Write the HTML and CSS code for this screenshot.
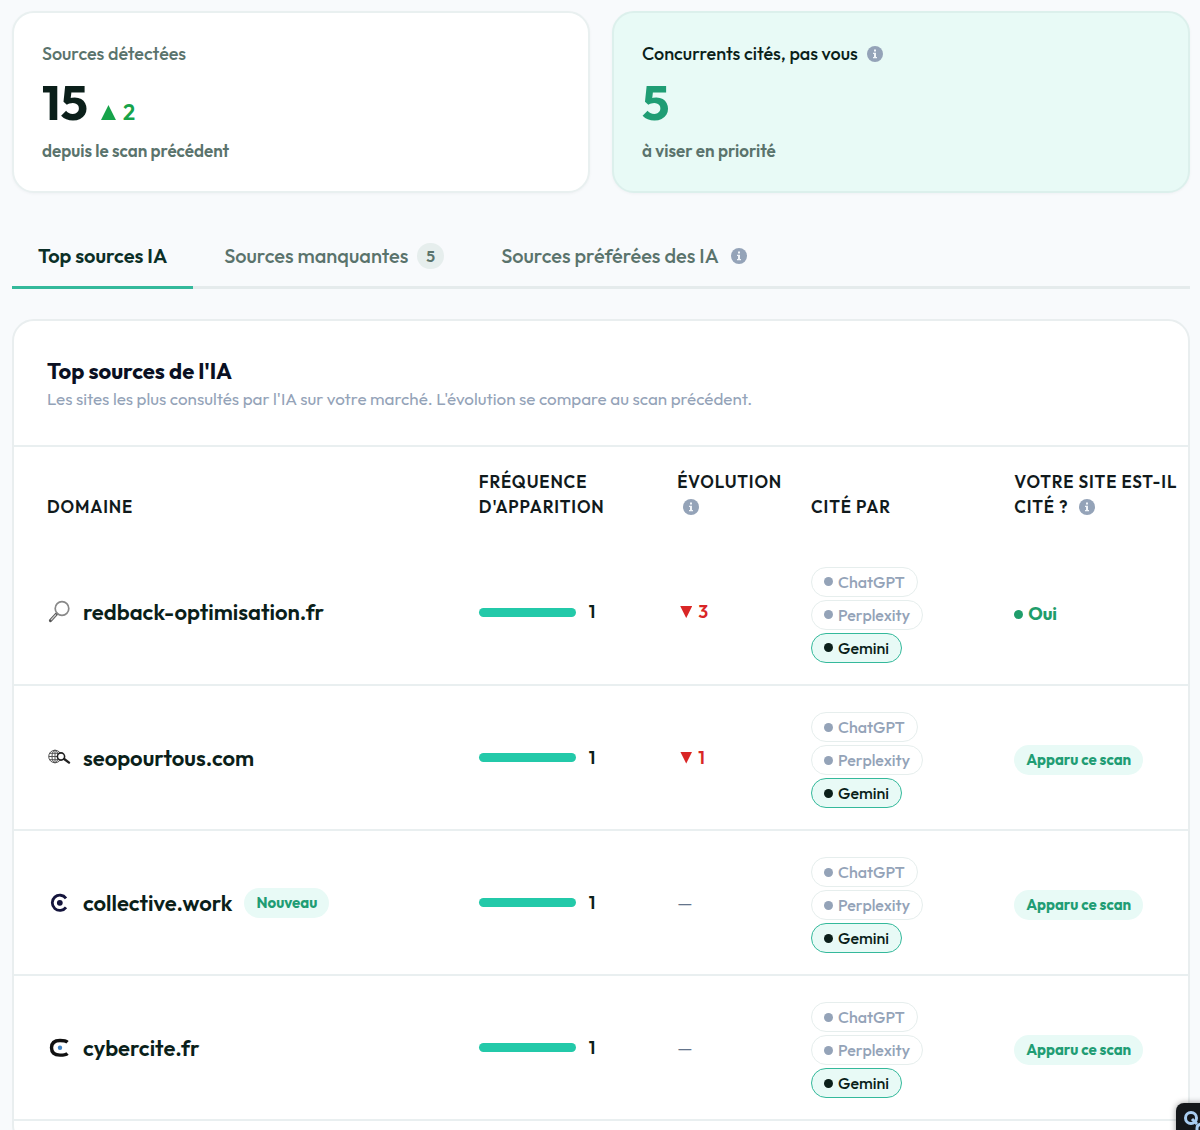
FILE: index.html
```html
<!DOCTYPE html>
<html lang="fr">
<head>
    <meta charset="UTF-8">
    <meta name="viewport" content="width=device-width, initial-scale=1.0">
    <title>Sources IA</title>
    <link rel="stylesheet" href="styles.css">
</head>
<body>
    <svg class="sprite" aria-hidden="true">
        <symbol id="info" viewBox="0 0 16 16">
            <circle cx="8" cy="8" r="8" fill="#94a3b8"/>
            <path d="M7 3.4h2v2H7zM6 6.7h3v4.2h1v1.3H6v-1.3h1V8H6z" fill="#f1f5f9"/>
        </symbol>
    </svg>

    <main class="page">
        <section class="stats">
            <div class="stat">
                <p class="stat-label">Sources détectées</p>
                <p class="stat-value">15 <span class="stat-delta"><i class="tri tri-up"></i>2</span></p>
                <p class="stat-note">depuis le scan précédent</p>
            </div>
            <div class="stat stat-accent">
                <p class="stat-label">Concurrents cités, pas vous <svg class="info"><use href="#info"/></svg></p>
                <p class="stat-value">5</p>
                <p class="stat-note">à viser en priorité</p>
            </div>
        </section>

        <nav class="tabs" role="tablist">
            <button class="tab active" role="tab" aria-selected="true">Top sources IA</button>
            <button class="tab" role="tab">Sources manquantes <span class="count">5</span></button>
            <button class="tab" role="tab">Sources préférées des IA <svg class="info"><use href="#info"/></svg></button>
        </nav>

        <section class="panel">
            <header class="panel-head">
                <h2>Top sources de l'IA</h2>
                <p>Les sites les plus consultés par l'IA sur votre marché. L'évolution se compare au scan précédent.</p>
            </header>
            <table class="sources">
                <colgroup>
                    <col class="col-domain">
                    <col class="col-freq">
                    <col class="col-evo">
                    <col class="col-cited">
                    <col class="col-site">
                </colgroup>
                <thead>
                    <tr>
                        <th>Domaine</th>
                        <th>Fréquence d'apparition</th>
                        <th>Évolution <svg class="info"><use href="#info"/></svg></th>
                        <th>Cité par</th>
                        <th>Votre site est-il cité ? <svg class="info"><use href="#info"/></svg></th>
                    </tr>
                </thead>
                <tbody>
                    <tr>
                        <td>
                            <div class="domain">
                                <svg class="favicon" viewBox="0 0 24 24" fill="none">
                                    <path d="M9.500 14 3.500 20.500" stroke="#555" stroke-width="3.200" stroke-linecap="round"/>
                                    <path d="M9 14.500 4 20" stroke="#ccc" stroke-width="1.200"/>
                                    <circle cx="15" cy="8.500" r="6.800" stroke="#888" stroke-width="1.700"/>
                                </svg>
                                redback-optimisation.fr
                            </div>
                        </td>
                        <td><div class="freq"><span class="bar"></span>1</div></td>
                        <td><span class="down"><i class="tri tri-down"></i>3</span></td>
                        <td>
                            <div class="chips">
                                <span class="chip">ChatGPT</span>
                                <span class="chip">Perplexity</span>
                                <span class="chip on">Gemini</span>
                            </div>
                        </td>
                        <td><span class="yes">Oui</span></td>
                    </tr>
                    <tr>
                        <td>
                            <div class="domain">
                                <svg class="favicon" viewBox="0 0 24 24" fill="none">
                                    <g stroke="#555" stroke-width="1">
                                        <circle cx="8" cy="10.500" r="6.300"/>
                                        <ellipse cx="8" cy="10.500" rx="3" ry="6.300"/>
                                        <path d="M8 4.200v12.600M1.700 10.500h12.600M2.500 7.300h11M2.500 13.700h11"/>
                                    </g>
                                    <circle cx="14" cy="10.500" r="3.600" fill="#fff" stroke="#222" stroke-width="1.600"/>
                                    <path d="m17.200 13 4.800 3.600" stroke="#222" stroke-width="2.400" stroke-linecap="round"/>
                                </svg>
                                seopourtous.com
                            </div>
                        </td>
                        <td><div class="freq"><span class="bar"></span>1</div></td>
                        <td><span class="down"><i class="tri tri-down"></i>1</span></td>
                        <td>
                            <div class="chips">
                                <span class="chip">ChatGPT</span>
                                <span class="chip">Perplexity</span>
                                <span class="chip on">Gemini</span>
                            </div>
                        </td>
                        <td><span class="badge">Apparu ce scan</span></td>
                    </tr>
                    <tr>
                        <td>
                            <div class="domain">
                                <svg class="favicon" viewBox="0 0 24 24" fill="none">
                                    <path d="M19 7.300A7.600 7.600 0 1 0 19 16.300" stroke="#14143c" stroke-width="2.800"/>
                                    <circle cx="12.800" cy="11.800" r="2.900" fill="#14143c"/>
                                </svg>
                                collective.work
                                <span class="badge">Nouveau</span>
                            </div>
                        </td>
                        <td><div class="freq"><span class="bar"></span>1</div></td>
                        <td><span class="none">—</span></td>
                        <td>
                            <div class="chips">
                                <span class="chip">ChatGPT</span>
                                <span class="chip">Perplexity</span>
                                <span class="chip on">Gemini</span>
                            </div>
                        </td>
                        <td><span class="badge">Apparu ce scan</span></td>
                    </tr>
                    <tr>
                        <td>
                            <div class="domain">
                                <svg class="favicon" viewBox="0 0 24 24" fill="none">
                                    <path d="M20.500 6.200C19 4.800 17 4.500 13 4.500 7 4.500 4.500 7 4.500 11.800S7 19.100 13 19.100c4 0 6-.3 7.500-1.700" stroke="#111" stroke-width="3.400"/>
                                    <circle cx="13" cy="11.800" r="2.200" fill="#3f83c4"/>
                                </svg>
                                cybercite.fr
                            </div>
                        </td>
                        <td><div class="freq"><span class="bar"></span>1</div></td>
                        <td><span class="none">—</span></td>
                        <td>
                            <div class="chips">
                                <span class="chip">ChatGPT</span>
                                <span class="chip">Perplexity</span>
                                <span class="chip on">Gemini</span>
                            </div>
                        </td>
                        <td><span class="badge">Apparu ce scan</span></td>
                    </tr>
                </tbody>
            </table>
        </section>
    </main>

    <button class="widget" aria-label="Assistant">
        <svg viewBox="0 0 32 32" fill="none" stroke="#a9cdf0" stroke-width="3">
            <circle cx="8" cy="8" r="5.500"/>
            <path d="m9 9 5 5M14 26v-8q0-4 6-4"/>
        </svg>
    </button>
</body>
</html>
```
FILE: styles.css
```css
* {
    margin: 0;
    padding: 0;
    box-sizing: border-box;
}

body {
    font-family: Outfit, Lato, sans-serif;
    font-size: 18px;
    line-height: 24px;
    color: #0b1f1a;
    background: #f8fafc;
    height: 100vh;
    overflow: hidden;
}

button {
    font: inherit;
    border: none;
    background: none;
    cursor: pointer;
}

.sprite {
    display: none;
}

.page {
    padding: 11px 10px 0 12px;
}

.info {
    width: 16px;
    height: 16px;
    margin-left: 6px;
    vertical-align: -2px;
}

/* stat cards */
.stats {
    display: grid;
    grid-template-columns: 1fr 1fr;
    gap: 22px;
}

.stat {
    padding: 28px;
    border: 2px solid #e9f0f0;
    border-radius: 22px;
    background: #fff;
    box-shadow: 0 1px 3px rgba(15, 23, 42, 0.04);
}

.stat-accent {
    background: #e8faf6;
    border-color: #dcf0ec;
}

.stat-label,
.stat-note {
    line-height: 25px;
    font-weight: 500;
    color: #5a736c;
}

.stat-note {
    font-size: 17px;
    font-weight: 600;
}

.stat-accent .stat-label {
    color: #0b1f1a;
}

.stat-value {
    display: flex;
    align-items: baseline;
    gap: 13px;
    margin: 12px 0;
    font-size: 49px;
    line-height: 48px;
    font-weight: 700;
}

.stat-accent .stat-value {
    color: #1f9d74;
}

.stat-delta {
    font-size: 22px;
    line-height: 24px;
    font-weight: 600;
    color: #16a34a;
}

.tri {
    display: inline-block;
    width: 15px;
    height: 15px;
    margin-right: 7px;
    background: currentColor;
}

.tri-up {
    clip-path: polygon(50% 0, 100% 100%, 0 100%);
}

.tri-down {
    width: 12px;
    height: 12px;
    margin: 0 6px 0 3px;
    clip-path: polygon(0 0, 100% 0, 50% 100%);
}

/* tabs */
.tabs {
    display: flex;
    gap: 5px;
    margin-top: 30px;
    box-shadow: inset 0 -3px #e5ebec;
}

.tab {
    display: flex;
    align-items: center;
    gap: 6px;
    padding: 20px 26px 17px;
    font-size: 20px;
    line-height: 26px;
    font-weight: 500;
    color: #5a736c;
    border-bottom: 3px solid transparent;
}

.tab.active {
    color: #0b2f27;
    font-weight: 600;
    border-bottom-color: #34b99b;
}

.count {
    padding: 0 9px;
    margin-left: 3px;
    font-size: 16px;
    font-weight: 600;
    border-radius: 13px;
    background: #e6eeed;
}

/* table panel */
.panel {
    margin-top: 30px;
    padding-bottom: 24px;
    border: 2px solid #e9eeef;
    border-radius: 22px;
    background: #fff;
}

.panel-head {
    padding: 35px 33px 33px;
    border-bottom: 2px solid #e9eff0;
}

.panel-head h2 {
    font-size: 22px;
    line-height: 30px;
    font-weight: 700;
    color: #0a1023;
}

.panel-head p {
    font-size: 17px;
    line-height: 26px;
    color: #94a3b8;
}

.sources {
    width: 100%;
    table-layout: fixed;
    border-collapse: collapse;
}

.col-domain { width: 38.4%; }
.col-freq { width: 16.9%; }
.col-evo { width: 11.4%; }
.col-cited { width: 17.3%; }
.col-site { width: 16%; }

.sources th {
    padding: 22px 8px 21px 14px;
    font-size: 17px;
    line-height: 25px;
    font-weight: 600;
    letter-spacing: 0.05em;
    text-align: left;
    text-transform: uppercase;
    vertical-align: bottom;
    color: #111a1c;
}

.sources td {
    height: 145px;
    padding: 0 0 0 14px;
    vertical-align: middle;
    border-bottom: 2px solid #e9eff0;
}

.sources th:first-child,
.sources td:first-child {
    padding-left: 33px;
}

.sources td:last-child {
    padding-top: 4px;
}

.domain {
    display: flex;
    align-items: center;
    gap: 12px;
    font-size: 22px;
    font-weight: 600;
}

.favicon {
    width: 24px;
    height: 24px;
}

.freq {
    display: flex;
    align-items: center;
    gap: 13px;
    font-weight: 600;
}

.bar {
    width: 97px;
    height: 9px;
    border-radius: 5px;
    background: #23c9a9;
}

.down {
    font-weight: 600;
    color: #d92626;
}

.none {
    color: #64748b;
}

.chips {
    display: flex;
    flex-direction: column;
    align-items: flex-start;
    gap: 3px;
    padding-top: 5px;
}

.chip {
    display: flex;
    align-items: center;
    gap: 5px;
    padding: 2px 12px;
    font-size: 16px;
    font-weight: 500;
    color: #94a3b8;
    border: 1px solid #e6eeed;
    border-radius: 15px;
}

.chip::before,
.yes::before {
    content: "";
    width: 9px;
    height: 9px;
    border-radius: 50%;
    background: currentColor;
}

.chip.on {
    color: #0b1f1a;
    background: #e8faf6;
    border-color: #34b99b;
}

.yes {
    display: flex;
    align-items: center;
    gap: 5px;
    font-weight: 700;
    color: #1f9d6b;
}

.badge {
    display: inline-block;
    padding: 3px 12px;
    font-size: 15px;
    font-weight: 700;
    color: #1f9d74;
    border-radius: 15px;
    background: #e8faf6;
}

.widget {
    display: flex;
    align-items: flex-start;
    position: fixed;
    right: -32px;
    bottom: -29px;
    width: 56px;
    height: 56px;
    padding: 7px;
    border-radius: 8px;
    background: #14171a;
    box-shadow: 0 0 6px rgba(0, 0, 0, 0.4);
}

.widget svg {
    width: 32px;
    height: 32px;
}
```
